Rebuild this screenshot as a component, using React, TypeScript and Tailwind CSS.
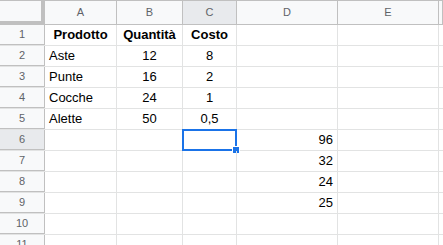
import React from 'react';

type Align = 'left' | 'center' | 'right';

interface Cell {
  v: string;
  align?: Align;
  bold?: boolean;
}

const cols = ['A', 'B', 'C', 'D', 'E', ''];
const widths = ['w-[72px]', 'w-[66px]', 'w-[54px]', 'w-[101px]', 'w-[101px]', 'flex-1'];

const rows: Cell[][] = [
  [{ v: 'Prodotto', align: 'center', bold: true }, { v: 'Quantità', align: 'center', bold: true }, { v: 'Costo', align: 'center', bold: true }],
  [{ v: 'Aste' }, { v: '12', align: 'center' }, { v: '8', align: 'center' }],
  [{ v: 'Punte' }, { v: '16', align: 'center' }, { v: '2', align: 'center' }],
  [{ v: 'Cocche' }, { v: '24', align: 'center' }, { v: '1', align: 'center' }],
  [{ v: 'Alette' }, { v: '50', align: 'center' }, { v: '0,5', align: 'center' }],
  [{ v: '' }, { v: '' }, { v: '' }, { v: '96', align: 'right' }],
  [{ v: '' }, { v: '' }, { v: '' }, { v: '32', align: 'right' }],
  [{ v: '' }, { v: '' }, { v: '' }, { v: '24', align: 'right' }],
  [{ v: '' }, { v: '' }, { v: '' }, { v: '25', align: 'right' }],
  [],
  [],
];

const alignClass: Record<Align, string> = {
  left: 'justify-start',
  center: 'justify-center',
  right: 'justify-end',
};

export default function App() {
  return (
    <div className="w-[443px] h-[245px] overflow-hidden bg-white font-['Liberation_Sans',Arial,sans-serif] border-t border-[#c0c0c0]">
      {/* column headers */}
      <div className="flex h-[24px] bg-[#f8f9fa] border-b border-[#c0c0c0]">
        <div className="w-[45px] h-full border-r-4 border-b-[3px] border-[#c0c0c0] bg-[#f8f9fa] shrink-0" />
        {cols.map((c, i) => (
          <div
            key={i}
            className={`${widths[i]} shrink-0 h-full flex items-center justify-center text-[11px] text-[#5f6368] border-r border-[#c0c0c0] ${c === 'C' ? 'bg-[#e8eaed]' : ''}`}
          >
            {c}
          </div>
        ))}
      </div>

      {rows.map((r, ri) => (
        <div key={ri} className="flex h-[21px] border-b border-[#e2e3e3]">
          <div
            className={`w-[45px] shrink-0 h-full flex items-center justify-center text-[11px] text-[#5f6368] border-r border-[#c0c0c0] -mb-px border-b ${ri === 5 ? 'bg-[#e8eaed]' : 'bg-[#f8f9fa]'}`}
          >
            {ri + 1}
          </div>
          {cols.map((_, ci) => {
            const cell = r[ci];
            const selected = ri === 5 && ci === 2;
            return (
              <div
                key={ci}
                className={`${widths[ci]} shrink-0 h-full relative flex items-center px-[4px] text-[13px] text-black border-r border-[#e2e3e3] ${alignClass[cell?.align ?? 'left']} ${cell?.bold ? 'font-bold' : ''}`}
              >
                {cell?.v}
                {selected && (
                  <div className="absolute -left-px -top-px -right-px -bottom-px border-2 border-[#1a73e8]">
                    <div className="absolute -right-[5px] -bottom-[5px] w-[8px] h-[8px] bg-[#1a73e8] border border-white" />
                  </div>
                )}
              </div>
            );
          })}
        </div>
      ))}
    </div>
  );
}
